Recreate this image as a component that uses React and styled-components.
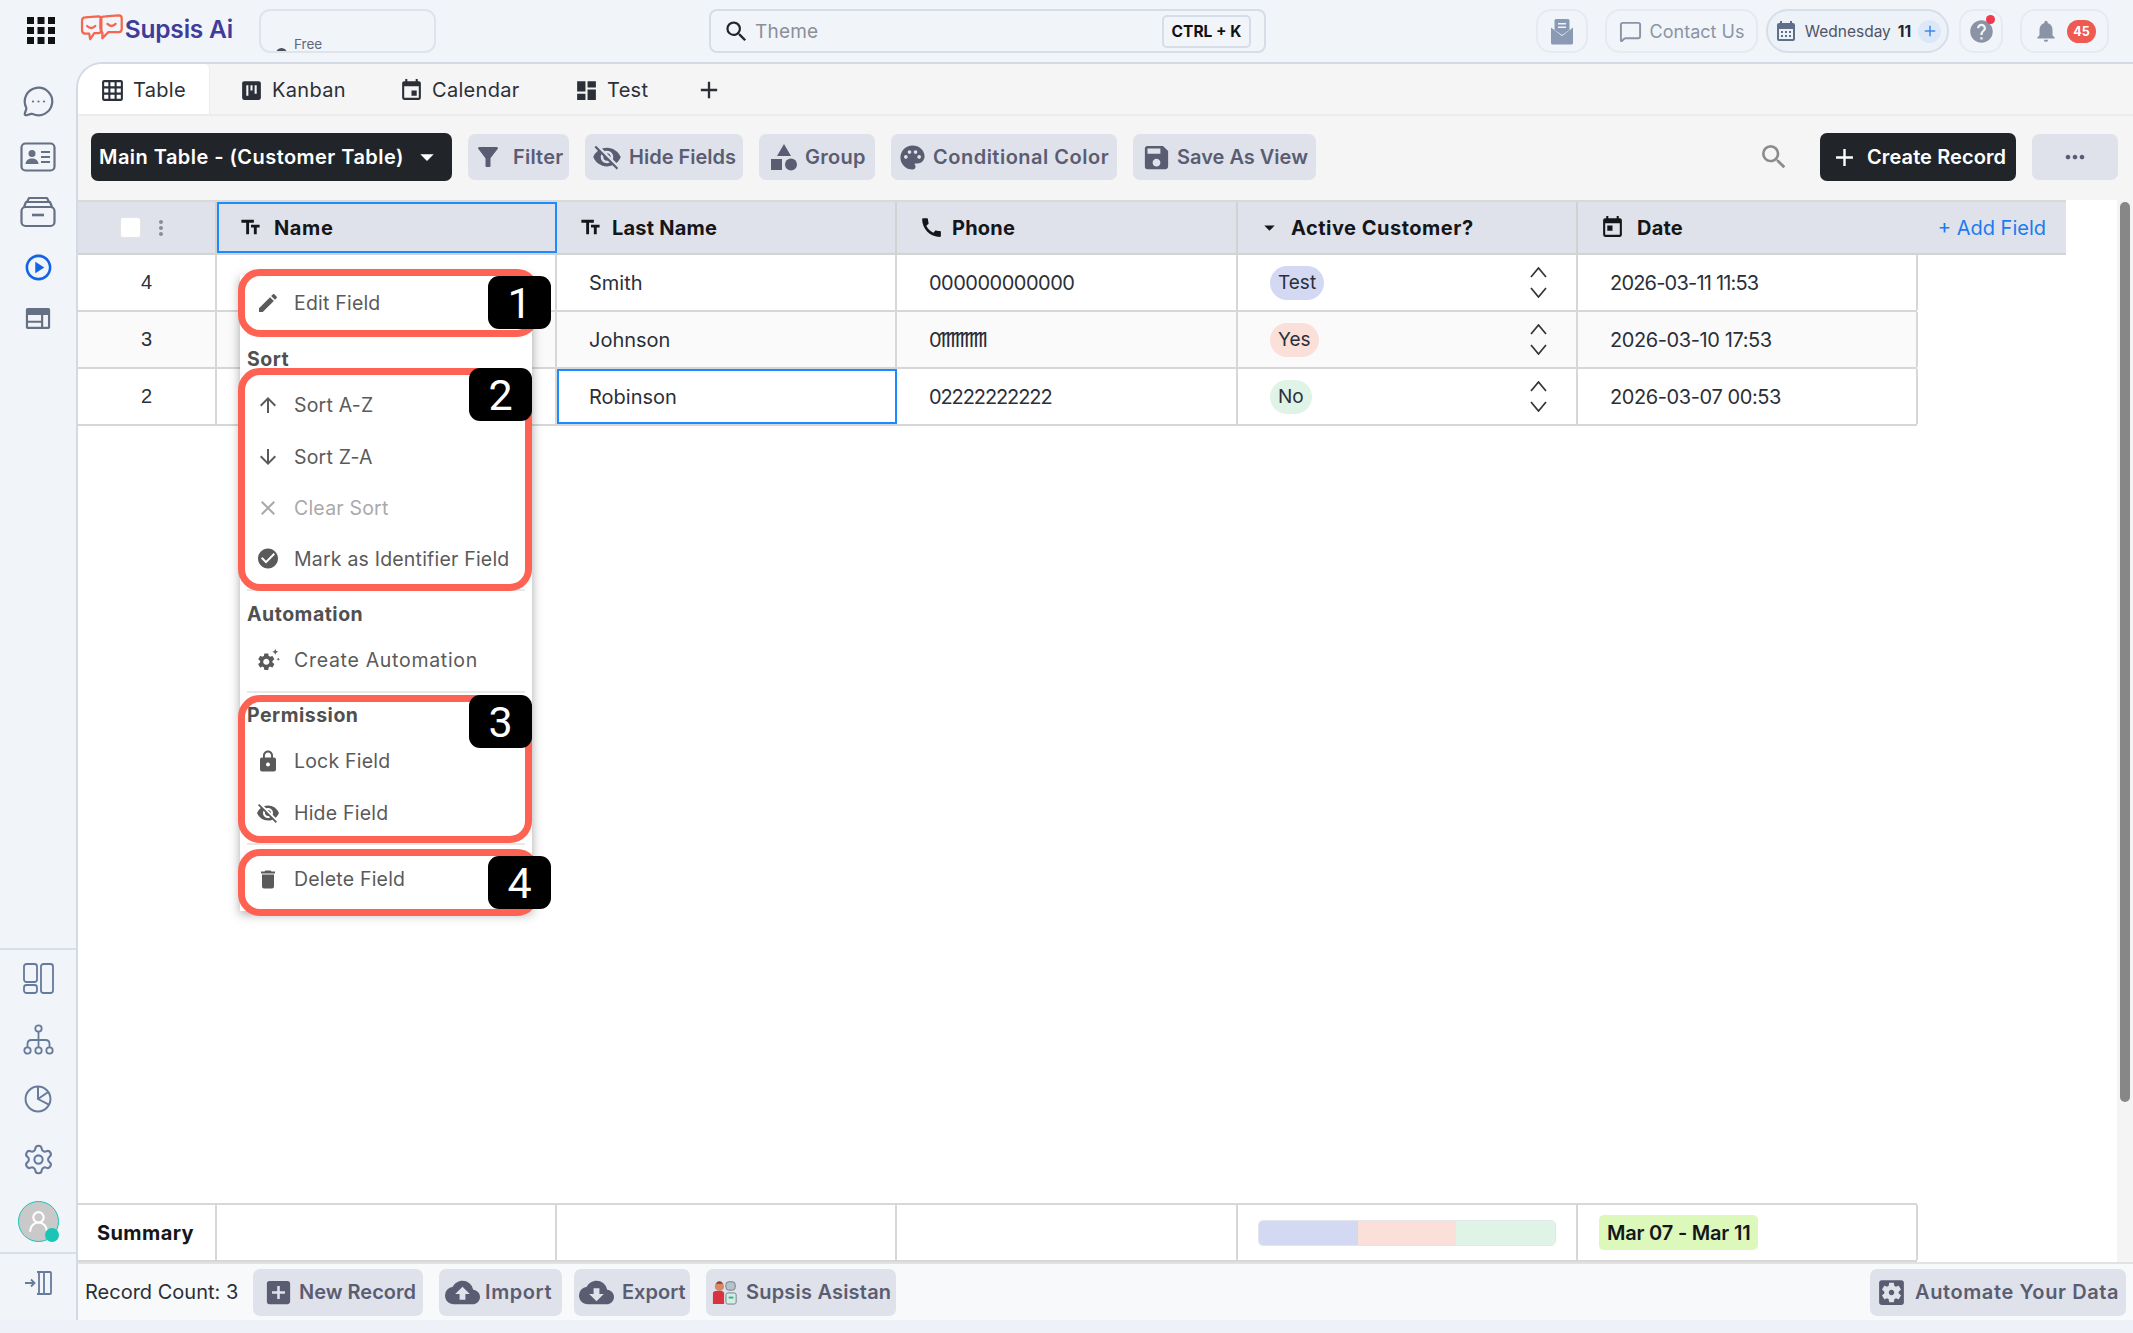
import React from 'react'
import styled, { createGlobalStyle } from 'styled-components'
import {
  MdAdd, MdAddBox, MdArrowDownward, MdArrowDropDown, MdArrowUpward, MdCall, MdCheckCircle, MdClose,
  MdCloudDownload, MdCloudUpload, MdDashboard, MdDelete, MdEdit, MdEvent, MdFilterAlt, MdGridOn,
  MdHelp, MdLock, MdMoreHoriz, MdMoreVert, MdNotifications, MdOutlinePlayCircle, MdPalette, MdSave,
  MdSearch, MdSettingsApplications, MdTextFields, MdToday, MdViewKanban, MdVisibilityOff, MdCalendarMonth,
} from 'react-icons/md'
import { MessageCircleMore, MessageSquare, Settings, UserRound } from 'lucide-react'

const FONT = '"Inter", "Noto Sans", sans-serif'
const COLUMNS = '139px 340px 340px 341px 340px 340px'

const GlobalStyle = createGlobalStyle`
  html, body { margin: 0; padding: 0; height: 100%; overflow: hidden; }
  body { font-family: ${FONT}; color: #212529; background: #f1f4f8; }
  * { box-sizing: border-box; }
`

/* top bar */

const Page = styled.div`
  width: 2133px;
  height: 1333px;
  display: flex;
  flex-direction: column;
`

const TopBar = styled.header`
  height: 62px;
  flex: none;
  display: flex;
  align-items: flex-start;
  padding: 9px 24px 0 27px;
  background: #f1f4f8;
`

const GridSlot = styled.div`
  display: flex;
  padding-top: 8px;
`

const Logo = styled.div`
  display: flex;
  align-items: center;
  gap: 1px;
  margin: 4px 26px 0 25px;
  width: 153px;
  height: 32px;
  font-size: 24.5px;
  font-weight: 600;
  letter-spacing: -0.2px;
  color: #3f3c9b;
  white-space: nowrap;
`

const PlanBox = styled.div`
  width: 177px;
  height: 44px;
  overflow: hidden;
  display: flex;
  align-items: flex-start;
  gap: 7px;
  padding: 27px 0 0 15px;
  border: 2px solid #dfe4ec;
  border-radius: 11px;
  font-size: 13.5px;
  line-height: 13px;
  color: #61687a;
`

const PlanIcon = styled.span`
  width: 11px;
  height: 11px;
  margin-top: 10px;
  border: 3px solid #4c5261;
  border-radius: 50%;
`

const SearchBox = styled.div`
  width: 557px;
  height: 44px;
  margin-left: 273px;
  padding: 0 13px 0 12px;
  display: flex;
  align-items: center;
  border: 2px solid #d6dde7;
  border-radius: 8px;
  font-size: 19px;
  letter-spacing: 0.2px;
  color: #8b8f98;
  svg { color: #22252b; margin-right: 5px; }
`

const Kbd = styled.span`
  margin-left: auto;
  width: 89px;
  height: 33px;
  display: flex;
  align-items: center;
  justify-content: center;
  border: 2px solid #d6dde7;
  border-radius: 5px;
  font-size: 15.5px;
  font-weight: 700;
  letter-spacing: 0;
  color: #111;
`

const TopActions = styled.div`
  margin-left: auto;
  display: flex;
`

const Pill = styled.div`
  position: relative;
  height: 44px;
  display: flex;
  align-items: center;
  justify-content: center;
  gap: ${p => p.$gap || 8}px;
  width: ${p => p.$w}px;
  margin-left: ${p => p.$ml || 0}px;
  border: 2px solid ${p => p.$strong ? '#d6dee9' : '#e7ebf1'};
  border-radius: ${p => p.$round ? 22 : 15}px;
  background: ${p => p.$strong ? '#edf2f8' : 'transparent'};
  font-size: 18px;
  color: #8a94a6;
`

const DayName = styled.span`
  font-size: 15.5px;
  color: #4f5566;
`

const DayNumber = styled.b`
  font-size: 15.5px;
  color: #1e2430;
`

const DayPlus = styled.span`
  width: 23px;
  height: 23px;
  border-radius: 50%;
  background: #dce8f7;
  color: #3c8ce7;
  display: flex;
  align-items: center;
  justify-content: center;
`

const HelpDot = styled.span`
  position: absolute;
  top: 4px;
  right: 6px;
  width: 9px;
  height: 9px;
  border-radius: 50%;
  background: #f0384f;
`

const CountBadge = styled.span`
  width: 29px;
  height: 23px;
  border-radius: 12px;
  background: #ee5a52;
  color: #fff;
  font-size: 12.5px;
  font-weight: 700;
  display: flex;
  align-items: center;
  justify-content: center;
`

/* side bar */

const Body = styled.div`
  flex: 1;
  min-height: 0;
  display: flex;
`

const Sidebar = styled.nav`
  width: 76px;
  flex: none;
  display: flex;
  flex-direction: column;
  align-items: center;
  padding-top: 23px;
  color: #667085;
`

const NavGroup = styled.div`
  width: 100%;
  flex: ${p => p.$grow ? 1 : 'none'};
  display: flex;
  flex-direction: column;
  align-items: center;
  gap: ${p => p.$gap}px;
  padding: ${p => p.$pad || '0'};
  border-top: ${p => p.$line ? '2px solid #d9dfe8' : 'none'};
`

const Avatar = styled.div`
  position: relative;
  width: 41px;
  height: 41px;
  margin-top: -5px;
  border-radius: 50%;
  border: 1.5px solid #19c5b6;
  background: #c9c9c9;
  color: #fff;
  display: flex;
  align-items: center;
  justify-content: center;
`

const AvatarDot = styled.span`
  position: absolute;
  right: -1px;
  bottom: -1px;
  width: 14px;
  height: 14px;
  border-radius: 50%;
  background: #19c5b6;
`

/* main */

const Main = styled.main`
  flex: 1;
  min-width: 0;
  display: flex;
  flex-direction: column;
  overflow: hidden;
  background: #f5f5f5;
  border-left: 2px solid #d3dae4;
  border-top: 2px solid #d3dae4;
  border-top-left-radius: 26px;
`

const Tabs = styled.div`
  height: 52px;
  flex: none;
  display: flex;
  align-items: stretch;
  border-bottom: 2px solid #ececec;
`

const Tab = styled.div`
  width: ${p => p.$w}px;
  display: flex;
  align-items: center;
  gap: 8px;
  padding-left: ${p => p.$pad}px;
  padding-top: 2px;
  font-size: 20px;
  letter-spacing: 0.3px;
  color: #2b2f38;
  background: ${p => p.$active ? '#fff' : 'transparent'};
  border-top-right-radius: ${p => p.$active ? 5 : 0}px;
  border-right: ${p => p.$active ? '1px solid #ececec' : 'none'};
`

const Toolbar = styled.div`
  height: 84px;
  flex: none;
  display: flex;
  align-items: center;
  padding: 0 15px 2px 13px;
  gap: 16px;
`

const TableSelect = styled.div`
  width: 361px;
  height: 48px;
  display: flex;
  align-items: center;
  padding-left: 8px;
  gap: 7px;
  background: #212529;
  color: #fff;
  border-radius: 7px;
  font-size: 20px;
  font-weight: 600;
  letter-spacing: 0.45px;
  white-space: nowrap;
`

const Tool = styled.div`
  height: ${p => p.$h || 46}px;
  width: ${p => p.$w}px;
  margin-left: ${p => p.$ml || '0'};
  flex: none;
  display: flex;
  align-items: center;
  justify-content: ${p => p.$center ? 'center' : 'flex-start'};
  gap: ${p => p.$gap || 5}px;
  padding-left: ${p => p.$center ? 0 : p.$pad || 8}px;
  background: #dfe2ea;
  border-radius: 7px;
  color: #5a5d72;
  font-size: 20px;
  font-weight: 600;
  letter-spacing: ${p => p.$ls || 0}px;
  white-space: nowrap;
`

const SearchTool = styled.div`
  margin-left: auto;
  margin-right: 14px;
  color: #8b8b8b;
  display: flex;
`

const CreateButton = styled.div`
  width: 196px;
  height: 48px;
  display: flex;
  align-items: center;
  padding-left: 10px;
  gap: 8px;
  background: #212529;
  color: #fff;
  border-radius: 7px;
  font-size: 20px;
  font-weight: 600;
  letter-spacing: 0.1px;
  white-space: nowrap;
`

const TableArea = styled.div`
  position: relative;
  flex: 1;
  min-height: 0;
  display: flex;
  background: #fff;
`

const TableScroll = styled.div`
  flex: 1;
  min-width: 0;
  display: flex;
  flex-direction: column;
  justify-content: space-between;
`

const Track = styled.div`
  width: 16px;
  flex: none;
  padding: 2px 3px;
  background: #f4f4f4;
`

const Thumb = styled.div`
  height: 900px;
  border-radius: 5px;
  background: #878787;
`

const HeaderRow = styled.div`
  width: 1988px;
  height: 55px;
  display: grid;
  grid-template-columns: 139px 340px 340px 341px 340px 488px;
  background: #dfe2ea;
  border-top: 2px solid #d9d9d9;
  border-bottom: 2px solid #d3d3d3;
`

const HeadCell = styled.div`
  position: relative;
  display: flex;
  align-items: center;
  gap: ${p => p.$gap || 10}px;
  padding-left: ${p => p.$pad || 22}px;
  border-right: 2px solid #d2d2d2;
  font-size: 20px;
  font-weight: 700;
  letter-spacing: ${p => p.$ls || 0.2}px;
  color: #14161a;
  &:last-child { border-right: none; }
  ${p => p.$focus && 'outline: 2.5px solid #1a8cff; outline-offset: -2px;'}
`

const CheckBox = styled.span`
  width: 21px;
  height: 21px;
  margin-left: 18px;
  background: #fff;
  border-radius: 3px;
  border: 1px solid #e4e4e4;
`

const AddField = styled.span`
  margin-left: auto;
  margin-right: 20px;
  font-size: 20px;
  font-weight: 400;
  letter-spacing: 0;
  color: #1a7cf0;
`

const Row = styled.div`
  width: 1839px;
  height: 57px;
  display: grid;
  grid-template-columns: ${COLUMNS};
  background: ${p => p.$alt ? '#fafafa' : '#fff'};
  border-bottom: 2px solid #d7d7d7;
`

const Cell = styled.div`
  display: flex;
  align-items: center;
  justify-content: ${p => p.$center ? 'center' : 'flex-start'};
  padding: 0 ${p => p.$padR || 0}px 0 ${p => p.$center ? 0 : p.$pad || 32}px;
  border-right: 2px solid #d7d7d7;
  font-size: 20px;
  letter-spacing: ${p => p.$ls || 0}px;
  color: #2b2f38;
  ${p => p.$focus && 'outline: 2.5px solid #1a8cff; outline-offset: -2px;'}
`

const IndexCell = styled(Cell)`
  font-family: "Liberation Sans", sans-serif;
`

const Choice = styled.span`
  height: 34px;
  padding: 0 8px;
  display: flex;
  align-items: center;
  border-radius: 17px;
  background: ${p => p.$bg};
  font-size: 19px;
`

const Stepper = styled.span`
  margin-left: auto;
  display: flex;
  flex-direction: column;
  gap: 9px;
  color: #333;
`

const SummaryRow = styled(Row)`
  height: 59px;
  border-top: 2px solid #d7d7d7;
  border-bottom: 2px solid #d7d7d7;
`

const SummaryLabel = styled(Cell)`
  font-weight: 700;
  color: #14161a;
  padding-left: 19px;
  letter-spacing: 0.4px;
`

const Bar = styled.div`
  width: 298px;
  height: 26px;
  display: flex;
  overflow: hidden;
  border-radius: 5px;
  border: 1px solid #e2e6e9;
`

const BarPart = styled.span`
  flex: 1;
  background: ${p => p.$bg};
`

const DateRange = styled.span`
  height: 35px;
  padding: 0 8px;
  display: flex;
  align-items: center;
  background: #dcf8bb;
  border-radius: 5px;
  font-size: 20px;
  font-weight: 600;
  letter-spacing: -0.2px;
  color: #14161a;
`

const Footer = styled.footer`
  height: 58px;
  flex: none;
  display: flex;
  align-items: center;
  gap: 16px;
  padding: 0 7px;
  background: #f8f9fb;
  border-top: 2px solid #e2e2e2;
`

const RecordCount = styled.span`
  width: 152px;
  font-size: 20px;
  color: #2b2f38;
  white-space: nowrap;
`

const BottomStrip = styled.div`
  height: 13px;
  flex: none;
  background: #eef1f8;
`

/* field menu, sits over the table */

const Menu = styled.div`
  position: absolute;
  left: 162px;
  top: 75px;
  width: 292px;
  padding: 2px 0 6px;
  background: #fff;
  box-shadow: 0 3px 10px rgba(0, 0, 0, 0.35);
  color: #5a5a5a;
  &::before {
    content: '';
    position: absolute;
    left: 22px;
    top: -8px;
    border: 8px solid transparent;
    border-top: none;
    border-bottom-color: #fff;
  }
`

const MenuItem = styled.div`
  height: ${p => p.$h || 51}px;
  display: flex;
  align-items: center;
  padding-left: 16px;
  gap: 14px;
  font-size: 19.5px;
  letter-spacing: ${p => p.$ls || 0.2}px;
  color: ${p => p.$off ? '#a9a9a9' : '#5a5a5a'};
  white-space: nowrap;
`

const MenuIcon = styled.span`
  width: 24px;
  display: flex;
  justify-content: center;
`

const MenuTitle = styled.div`
  height: 35px;
  padding: 0 0 5px 7px;
  display: flex;
  align-items: center;
  font-size: 19.5px;
  font-weight: 700;
  letter-spacing: 0.5px;
  color: #505050;
`

const MenuLine = styled.hr`
  margin: ${p => p.$m || '0'};
  border: none;
  border-top: 2px solid #e8e8e8;
`

const Mark = styled.div`
  position: absolute;
  left: ${p => p.$x}px;
  top: ${p => p.$y}px;
  width: ${p => p.$w}px;
  height: ${p => p.$h}px;
  border: 7px solid #fe6253;
  border-radius: 22px;
`

const MarkNumber = styled.div`
  position: absolute;
  left: ${p => p.$x}px;
  top: ${p => p.$y}px;
  width: 63px;
  height: 53px;
  display: flex;
  align-items: center;
  justify-content: center;
  background: #000;
  border-radius: 11px;
  color: #fff;
  font-family: "Roboto", sans-serif;
  font-size: 43px;
`

/* drawings */

const LogoMark = () => (
  <svg width="46" height="32" viewBox="0 0 43 30" fill="none" stroke="#f4664f" strokeWidth="2.2" strokeLinecap="round" strokeLinejoin="round">
    <path d="M5 3.5 L18 2.5 Q21 2.5 21 5.5 V16 Q21 19 18 19 H14 L10 25 L9 19.5 H5 Q2 19.5 2 16 V7 Q2 3.5 5 3.5Z" />
    <path d="M25 2.5 L38 1.5 Q41 1.5 41 4.5 V15 Q41 18 38 18 H28 L22 24 L22 18.5 Q20 17 20 14 V6 Q20 2.500 25 2.500Z" />
    <path d="M7 12 Q11 16 15 12" />
    <path d="M27 10 Q31 14 35 10" />
  </svg>
)

const AppsGrid = () => (
  <svg width="28" height="27" viewBox="0 0 28 27" fill="#111">
    {[0, 10, 20].flatMap(y => [0, 10.5, 21].map(x => <rect key={`${x}-${y}`} x={x} y={y} width="7" height="7" />))}
  </svg>
)

const MailIcon = () => (
  <svg width="24" height="28" viewBox="0 0 24 28" fill="#8a9ab5">
    <path d="M6 2h12a1.5 1.5 0 0 1 1.500 1.500V13L12 18 4.500 13V3.500A1.500 1.500 0 0 1 6 2z" />
    <path d="M1 10.500 12 19l11-8.500V26a1.500 1.500 0 0 1-1.500 1.500h-19A1.500 1.500 0 0 1 1 26z" />
    <path d="M8 6h8v1.500H8zM8 9.500h8V11H8z" fill="#f1f4f8" />
  </svg>
)

const CardIcon = () => (
  <svg width="36" height="30" viewBox="0 0 36 30" fill="none" stroke="#667085" strokeWidth="2.200">
    <rect x="1.500" y="1.500" width="33" height="27" rx="4" />
    <circle cx="12" cy="11.500" r="3.500" fill="#667085" stroke="none" />
    <path d="M5.500 22c.5-4 3-5.500 6.500-5.500s6 1.500 6.500 5.500z" fill="#667085" stroke="none" />
    <path d="M21 10h9M21 15h9M21 20h9" />
  </svg>
)

const TrayIcon = () => (
  <svg width="36" height="32" viewBox="0 0 36 32" fill="none" stroke="#667085" strokeWidth="2.200" strokeLinejoin="round">
    <path d="M7 6 9 2h18l2 4" />
    <path d="M4 11 6 6h24l2 5" />
    <rect x="1.500" y="11" width="33" height="19" rx="4" />
    <path d="M12 19h12" strokeWidth="2.600" />
  </svg>
)

const PanelIcon = () => (
  <svg width="26" height="23" viewBox="0 0 30 26" fill="#667085">
    <path fillRule="evenodd" d="M3 1h24a2 2 0 0 1 2 2v20a2 2 0 0 1-2 2H3a2 2 0 0 1-2-2V3a2 2 0 0 1 2-2zM3.500 9v6.500h15V9zM3.500 18v4.500h15V18zM21 9v13.500h5.500V9z" />
  </svg>
)

const BoardIcon = () => (
  <svg width="31" height="31" viewBox="0 0 31 31" fill="none" stroke="#667a9c" strokeWidth="1.800">
    <rect x="1" y="1" width="13" height="18" rx="2.500" />
    <rect x="1" y="22" width="13" height="8" rx="2.500" />
    <rect x="18" y="1" width="12" height="29" rx="2.500" />
  </svg>
)

const TreeIcon = () => (
  <svg width="31" height="31" viewBox="0 0 31 31" fill="none" stroke="#667a9c" strokeWidth="1.800">
    <circle cx="15.500" cy="4.500" r="3.200" />
    <circle cx="4.500" cy="26.500" r="3.200" />
    <circle cx="15.500" cy="26.500" r="3.200" />
    <circle cx="26.500" cy="26.500" r="3.200" />
    <path d="M15.500 7.700v15.600M4.500 23.300V20q0-4 4-4h14q4 0 4 4v3.300" />
  </svg>
)

const PieIcon = () => (
  <svg width="28" height="28" viewBox="0 0 27 27" fill="none" stroke="#667a9c" strokeWidth="1.900">
    <circle cx="13.500" cy="13.500" r="12" />
    <path d="M13.500 1.500v12l10.500 5.500M13.500 13.500 23 7" />
  </svg>
)

const ExitIcon = () => (
  <svg width="28" height="24" viewBox="0 0 28 24" fill="none" stroke="#667a9c" strokeWidth="1.800">
    <path d="M1 12h9M7 8.500 10.500 12 7 15.500" />
    <rect x="20" y="1" width="7" height="22" rx="1" />
    <path d="M15 1v22" />
    <path d="M13 1h7M13 23h7" />
  </svg>
)

const ShapesIcon = () => (
  <svg width="28" height="28" viewBox="0 0 28 28" fill="#5a5d72">
    <path d="M14 1 21 13H7z" />
    <rect x="1" y="16" width="11" height="11" />
    <circle cx="21" cy="21.500" r="6" />
  </svg>
)

const RobotIcon = () => (
  <svg width="26" height="26" viewBox="0 0 28 28">
    <circle cx="8" cy="8" r="5" fill="#d98866" />
    <path d="M4 5q4-5 8 0z" fill="#8a3b2a" />
    <path d="M1 27V16q0-3 3-3h6q3 0 3 3v11z" fill="#d8333f" />
    <rect x="15" y="3" width="10" height="9" rx="3" fill="#b7c2c9" stroke="#6d7b85" />
    <rect x="15" y="15" width="11" height="12" rx="2" fill="#d3ece4" stroke="#6d7b85" />
    <path d="M18 20h5" stroke="#2fae8e" strokeWidth="2" />
  </svg>
)

const SparkGear = () => (
  <svg width="26" height="24" viewBox="0 0 28 26" fill="#5a5a5a">
    <g transform="translate(0 3)">
      <path d="M19.140 12.940c.04-.3.06-.61.06-.94 0-.32-.02-.64-.07-.94l2.030-1.580c.18-.14.23-.41.12-.61l-1.920-3.320c-.12-.22-.37-.29-.59-.22l-2.390.96c-.5-.38-1.030-.7-1.620-.94l-.36-2.540c-.04-.24-.24-.41-.48-.41h-3.840c-.24 0-.43.17-.47.41l-.36 2.540c-.59.24-1.130.57-1.620.94l-2.390-.96c-.22-.08-.47 0-.59.22L2.740 8.870c-.12.21-.08.47.12.61l2.030 1.580c-.05.3-.09.63-.09.94s.02.64.07.94l-2.030 1.580c-.18.14-.23.41-.12.61l1.920 3.320c.12.22.37.29.59.22l2.390-.96c.5.38 1.030.7 1.620.94l.36 2.540c.05.24.24.41.48.41h3.840c.24 0 .44-.17.47-.41l.36-2.540c.59-.24 1.130-.56 1.620-.94l2.390.96c.22.08.47 0 .59-.22l1.920-3.320c.12-.22.07-.47-.12-.61l-2.010-1.580zM12 15.600c-1.980 0-3.600-1.620-3.600-3.600s1.620-3.600 3.600-3.600 3.600 1.620 3.600 3.600-1.620 3.600-3.600 3.600z" />
    </g>
    <path d="M22.500 0l1 2.500 2.500 1-2.500 1-1 2.500-1-2.500-2.500-1 2.500-1zM26 10l.6 1.400 1.400.6-1.400.6-.6 1.400-.6-1.400-1.400-.6 1.400-.6z" />
  </svg>
)

const Chevron = ({ up }) => (
  <svg width="17" height="11" viewBox="0 0 17 11" fill="none" stroke="#333" strokeWidth="1.700">
    <path d={up ? 'M1 10 8.500 1 16 10' : 'M1 1 8.500 10 16 1'} />
  </svg>
)

const FIELD_ICON = { text: MdTextFields, call: MdCall, drop: MdArrowDropDown, date: MdToday }

const Head = ({ icon, children, ...rest }) => {
  const Icon = FIELD_ICON[icon]
  return (
    <HeadCell {...rest}>
      <Icon size={icon === 'text' ? 23 : 25} />
      {children}
    </HeadCell>
  )
}

const rows = [
  { id: 4, last: 'Smith', phone: '000000000000', phoneLs: -0.5, choice: 'Test', bg: '#d3d8f3', date: '2026-03-11 11:53', dateLs: -0.8 },
  { id: 3, last: 'Johnson', phone: '01111111111', phoneLs: -3.5, choice: 'Yes', bg: '#fbdfd9', date: '2026-03-10 17:53', dateLs: -0.4, alt: true },
  { id: 2, last: 'Robinson', phone: '02222222222', phoneLs: -1.1, choice: 'No', bg: '#dff3e7', date: '2026-03-07 00:53', dateLs: -0.4, focus: true },
]

const tabs = [
  { label: 'Table', icon: MdGridOn, w: 132, pad: 22, active: true },
  { label: 'Kanban', icon: MdViewKanban, w: 159, pad: 29 },
  { label: 'Calendar', icon: MdEvent, w: 176, pad: 30 },
  { label: 'Test', icon: MdDashboard, w: 150, pad: 29 },
]

const tools = [
  { label: 'Filter', icon: <MdFilterAlt size={30} />, w: 101, pad: 5, gap: 10, ls: 0.2 },
  { label: 'Hide Fields', icon: <MdVisibilityOff size={30} />, w: 158, pad: 7, gap: 7 },
  { label: 'Group', icon: <ShapesIcon />, w: 116, pad: 11, gap: 7, ls: 0.3 },
  { label: 'Conditional Color', icon: <MdPalette size={29} />, w: 226, pad: 7, gap: 6, ls: 0.5 },
  { label: 'Save As View', icon: <MdSave size={31} />, w: 183, pad: 8 },
]

function App() {
  return (
    <Page>
      <GlobalStyle />
      <TopBar>
        <GridSlot><AppsGrid /></GridSlot>
        <Logo><LogoMark />Supsis Ai</Logo>
        <PlanBox><PlanIcon />Free</PlanBox>
        <SearchBox><MdSearch size={27} />Theme<Kbd>CTRL + K</Kbd></SearchBox>
        <TopActions>
          <Pill $w={52}><MailIcon /></Pill>
          <Pill $w={153} $ml={17}><MessageSquare size={23} />Contact Us</Pill>
          <Pill $w={183} $ml={8} $round $strong $gap={7}>
            <MdCalendarMonth size={24} color="#5f6f8a" />
            <DayName>Wednesday</DayName>
            <DayNumber>11</DayNumber>
            <DayPlus><MdAdd size={18} /></DayPlus>
          </Pill>
          <Pill $w={44} $ml={10}><MdHelp size={27} /><HelpDot /></Pill>
          <Pill $w={89} $ml={17}><MdNotifications size={26} /><CountBadge>45</CountBadge></Pill>
        </TopActions>
      </TopBar>
      <Body>
        <Sidebar>
          <NavGroup $grow $gap={24}>
            <MessageCircleMore size={33} strokeWidth={1.6} />
            <CardIcon />
            <TrayIcon />
            <MdOutlinePlayCircle size={31} color="#1463e6" />
            <PanelIcon />
          </NavGroup>
          <NavGroup $line $gap={30} $pad="13px 0 10px">
            <BoardIcon />
            <TreeIcon />
            <PieIcon />
            <Settings size={33} strokeWidth={1.5} color="#667a9c" />
            <Avatar><UserRound size={25} /><AvatarDot /></Avatar>
          </NavGroup>
          <NavGroup $line $gap={0} $pad="17px 0 25px"><ExitIcon /></NavGroup>
        </Sidebar>
        <Main>
          <Tabs>
            {tabs.map(t => (
              <Tab key={t.label} $w={t.w} $pad={t.pad} $active={t.active}><t.icon size={25} />{t.label}</Tab>
            ))}
            <Tab $w={40} $pad={0}><MdAdd size={28} /></Tab>
          </Tabs>
          <Toolbar>
            <TableSelect>Main Table - (Customer Table)<MdArrowDropDown size={32} /></TableSelect>
            {tools.map(t => (
              <Tool key={t.label} $w={t.w} $pad={t.pad} $gap={t.gap} $ls={t.ls}>{t.icon}{t.label}</Tool>
            ))}
            <SearchTool><MdSearch size={32} /></SearchTool>
            <CreateButton><MdAdd size={29} />Create Record</CreateButton>
            <Tool $w={86} $center><MdMoreHoriz size={28} /></Tool>
          </Toolbar>
          <TableArea>
            <TableScroll>
              <div>
                <HeaderRow>
                  <HeadCell $pad={24} $gap={8}><CheckBox /><MdMoreVert size={24} color="#8a8d99" /></HeadCell>
                  <Head icon="text" $focus $gap={12} $ls={0.6}>Name</Head>
                  <Head icon="text">Last Name</Head>
                  <Head icon="call" $gap={8}>Phone</Head>
                  <Head icon="drop" $pad={19} $gap={9} $ls={0.5}>Active Customer?</Head>
                  <Head icon="date" $gap={12}>Date<AddField>+ Add Field</AddField></Head>
                </HeaderRow>
                {rows.map(r => (
                  <Row key={r.id} $alt={r.alt}>
                    <IndexCell $center>{r.id}</IndexCell>
                    <Cell />
                    <Cell $focus={r.focus}>{r.last}</Cell>
                    <Cell $ls={r.phoneLs}>{r.phone}</Cell>
                    <Cell $padR={29}>
                      <Choice $bg={r.bg}>{r.choice}</Choice>
                      <Stepper><Chevron up /><Chevron /></Stepper>
                    </Cell>
                    <Cell $ls={r.dateLs}>{r.date}</Cell>
                  </Row>
                ))}
              </div>
              <SummaryRow>
                <SummaryLabel>Summary</SummaryLabel>
                <Cell />
                <Cell />
                <Cell />
                <Cell $pad={20}>
                  <Bar>
                    <BarPart $bg="#d3d8f3" />
                    <BarPart $bg="#fbdfd9" />
                    <BarPart $bg="#dff3e7" />
                  </Bar>
                </Cell>
                <Cell $pad={21}><DateRange>Mar 07 - Mar 11</DateRange></Cell>
              </SummaryRow>
            </TableScroll>
            <Track><Thumb /></Track>
            <Menu>
              <MenuItem><MenuIcon><MdEdit size={24} /></MenuIcon>Edit Field</MenuItem>
              <MenuLine $m="5px 7px 9px" />
              <MenuTitle>Sort</MenuTitle>
              <MenuItem $h={52}><MenuIcon><MdArrowUpward size={24} /></MenuIcon>Sort A-Z</MenuItem>
              <MenuItem><MenuIcon><MdArrowDownward size={24} /></MenuIcon>Sort Z-A</MenuItem>
              <MenuItem $off><MenuIcon><MdClose size={24} /></MenuIcon>Clear Sort</MenuItem>
              <MenuItem><MenuIcon><MdCheckCircle size={25} /></MenuIcon>Mark as Identifier Field</MenuItem>
              <MenuLine $m="5px 7px 8px" />
              <MenuTitle>Automation</MenuTitle>
              <MenuItem $h={52} $ls={0.7}><MenuIcon><SparkGear /></MenuIcon>Create Automation</MenuItem>
              <MenuLine $m="5px 7px 7px" />
              <MenuTitle>Permission</MenuTitle>
              <MenuItem $h={52}><MenuIcon><MdLock size={25} /></MenuIcon>Lock Field</MenuItem>
              <MenuItem><MenuIcon><MdVisibilityOff size={24} /></MenuIcon>Hide Field</MenuItem>
              <MenuLine $m="5px 7px 8px" />
              <MenuItem $h={52}><MenuIcon><MdDelete size={25} /></MenuIcon>Delete Field</MenuItem>
            </Menu>
            <Mark $x={160} $y={69} $w={301} $h={68} />
            <MarkNumber $x={410} $y={76}>1</MarkNumber>
            <Mark $x={160} $y={168} $w={294} $h={223} />
            <MarkNumber $x={391} $y={168}>2</MarkNumber>
            <Mark $x={160} $y={495} $w={294} $h={148} />
            <MarkNumber $x={391} $y={495}>3</MarkNumber>
            <Mark $x={160} $y={649} $w={301} $h={67} />
            <MarkNumber $x={410} $y={656}>4</MarkNumber>
          </TableArea>
          <Footer>
            <RecordCount>Record Count: 3</RecordCount>
            <Tool $w={170} $h={47} $pad={10} $gap={5}><MdAddBox size={31} />New Record</Tool>
            <Tool $w={123} $h={47} $pad={6} $ls={0.6}><MdCloudUpload size={35} />Import</Tool>
            <Tool $w={116} $h={47} $pad={5} $gap={8} $ml="-4px"><MdCloudDownload size={35} />Export</Tool>
            <Tool $w={190} $h={47} $pad={6} $gap={8} $ls={0.2}><RobotIcon />Supsis Asistan</Tool>
            <Tool $w={256} $h={47} $pad={5} $gap={7} $ls={0.6} $ml="auto"><MdSettingsApplications size={33} />Automate Your Data</Tool>
          </Footer>
        </Main>
      </Body>
      <BottomStrip />
    </Page>
  )
}

export default App
